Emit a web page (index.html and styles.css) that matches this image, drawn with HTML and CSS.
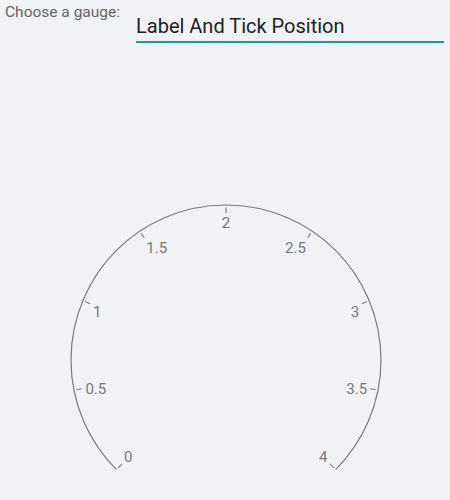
FILE: index.html
```html
<!DOCTYPE html>
<html>
<head>
<meta charset="utf-8">
<link rel="stylesheet" href="styles.css">
</head>
<body>
<div class="header">
  <div class="label">Choose a gauge:</div>
  <div class="select">Label And Tick Position</div>
</div>
<svg class="gauge" width="450" height="456" viewBox="0 44 450 456" xmlns="http://www.w3.org/2000/svg">
  <path class="axis" d="M116.4 469.6 A155 155 0 1 1 335.6 469.6"/>
  <g class="ticks">
    <line x1="118.2" y1="467.8" x2="122.1" y2="463.9"/>
    <line x1="76.4" y1="389.8" x2="81.8" y2="388.7"/>
    <line x1="85.1" y1="301.6" x2="90.2" y2="303.7"/>
    <line x1="141.3" y1="233.2" x2="144.3" y2="237.8"/>
    <line x1="226" y1="207.5" x2="226" y2="213"/>
    <line x1="310.7" y1="233.2" x2="307.7" y2="237.8"/>
    <line x1="366.9" y1="301.6" x2="361.8" y2="303.7"/>
    <line x1="375.6" y1="389.8" x2="370.2" y2="388.7"/>
    <line x1="333.8" y1="467.8" x2="329.9" y2="463.9"/>
  </g>
  <g class="labels">
    <text x="128.3" y="462.2">0</text>
    <text x="95.8" y="394.4">0.5</text>
    <text x="97.3" y="317">1</text>
    <text x="156.7" y="252.7">1.5</text>
    <text x="226" y="227.6">2</text>
    <text x="295.5" y="252.7">2.5</text>
    <text x="355" y="316.8">3</text>
    <text x="356.7" y="394.4">3.5</text>
    <text x="323.3" y="462.2">4</text>
  </g>
</svg>
</body>
</html>
```
FILE: styles.css
```css
html, body {
  margin: 0;
  padding: 0;
  background: #f1f2f6;
}
body {
  width: 450px;
  height: 500px;
  overflow: hidden;
  font-family: Roboto, "Noto Sans", sans-serif;
}
.header {
  display: grid;
  grid-template-columns: 131px 1fr;
  padding: 0 6px 0 5px;
  height: 44px;
  box-sizing: border-box;
}
.label {
  font-size: 15.5px;
  color: #666666;
  padding-top: 2.6px;
  white-space: nowrap;
}
.select {
  margin-top: 14.8px;
  font-size: 20px;
  line-height: 23.4px;
  color: #212121;
  padding-bottom: 3px;
  border-bottom: 2px solid #1b9e8e;
  white-space: nowrap;
  align-self: start;
}
.gauge {
  display: block;
}
.axis {
  fill: none;
  stroke: #7a7a7a;
  stroke-width: 1.2;
}
.ticks line {
  stroke: #7a7a7a;
  stroke-width: 1.1;
}
.labels text {
  font-family: Roboto, "Noto Sans", sans-serif;
  font-size: 15px;
  fill: #777777;
  text-anchor: middle;
}
```
